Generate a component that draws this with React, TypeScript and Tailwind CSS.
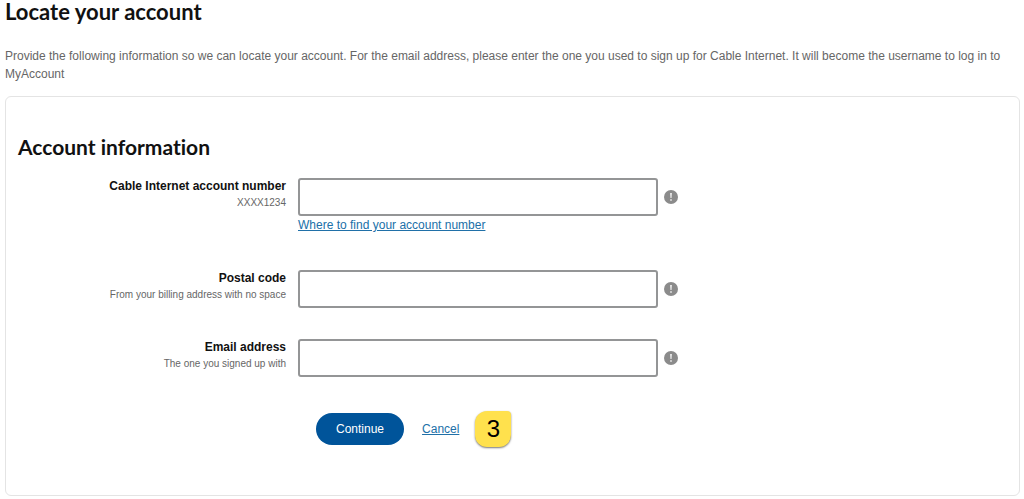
import type { ReactNode } from "react";

interface FieldProps {
  id: string;
  label: string;
  hint: string;
  type?: string;
  children?: ReactNode;
}

function InfoIcon() {
  return (
    <svg viewBox="0 0 14 14" className="h-3.5 w-3.5" aria-hidden="true">
      <circle cx="7" cy="7" r="7" fill="#8b8b8b" />
      <path d="M6 2.9h2l-.4 5H6.4z" fill="#e4e4e4" />
      <circle cx="7" cy="10" r=".9" fill="#e4e4e4" />
    </svg>
  );
}

function Field({ id, label, hint, type = "text", children }: FieldProps) {
  return (
    <div className="flex gap-3">
      <div className="w-67 shrink-0 text-right">
        <label htmlFor={id} className="block text-[12px] leading-4 font-bold text-[#111]">
          {label}
        </label>
        <p id={`${id}-hint`} className="text-[10px] leading-[18px] text-[#666]">
          {hint}
        </p>
      </div>
      <div className="min-w-0 flex-1">
        <div className="flex items-center gap-1.5">
          <input
            id={id}
            type={type}
            aria-describedby={`${id}-hint`}
            className="h-[38px] w-full max-w-90 rounded-[3px] border-2 border-[#949596] bg-white px-3 text-[12px] text-[#111]"
          />
          <button type="button" aria-label={`Help with ${label}`} className="shrink-0">
            <InfoIcon />
          </button>
        </div>
        {children}
      </div>
    </div>
  );
}

export default function App() {
  return (
    <main className="bg-white pr-1 pb-[2px] pl-[5px] font-['Liberation_Sans',Arial,sans-serif] text-[12px] text-[#666]">
      <h1 className="font-[Lato,sans-serif] text-[22px] leading-6 font-bold text-[#111]">
        Locate your account
      </h1>
      <p className="mt-[23px] leading-[18px]">
        Provide the following information so we can locate your account. For the email address, please
        enter the one you used to sign up for Cable Internet. It will become the username to log in to
        MyAccount
      </p>

      <form
        className="mt-[13px] rounded-md border border-[#e4e4e4] px-3 pt-9 pb-12"
        onSubmit={(e) => e.preventDefault()}
      >
        <h2 className="font-[Lato,sans-serif] text-[21px] leading-7 font-bold text-[#111] [font-variant-ligatures:none]">
          Account information
        </h2>
        <div className="mt-[17px]">
          <Field id="account-number" label="Cable Internet account number" hint="XXXX1234">
            <a href="#account-number-help" className="block w-fit leading-[18px] text-[#2070a8] underline">
              Where to find your account number
            </a>
          </Field>
        </div>
        <div className="mt-9 space-y-[31px]">
          <Field id="postal-code" label="Postal code" hint="From your billing address with no space" />
          <Field id="email" label="Email address" hint="The one you signed up with" type="email" />
        </div>

        <div className="mt-[34px] ml-[298px] flex items-center">
          <button
            type="submit"
            className="h-8 rounded-full bg-[#00549a] px-5 text-[12px] text-white"
          >
            Continue
          </button>
          <a href="#cancel" className="ml-[18px] text-[#2070a8] underline">
            Cancel
          </a>
          <span className="ml-4 flex size-9 items-center justify-center rounded-xl rounded-tr-sm bg-[#ffe14d] text-2xl text-black shadow-[0_1px_2px_#777]">
            3
          </span>
        </div>
      </form>
    </main>
  );
}
